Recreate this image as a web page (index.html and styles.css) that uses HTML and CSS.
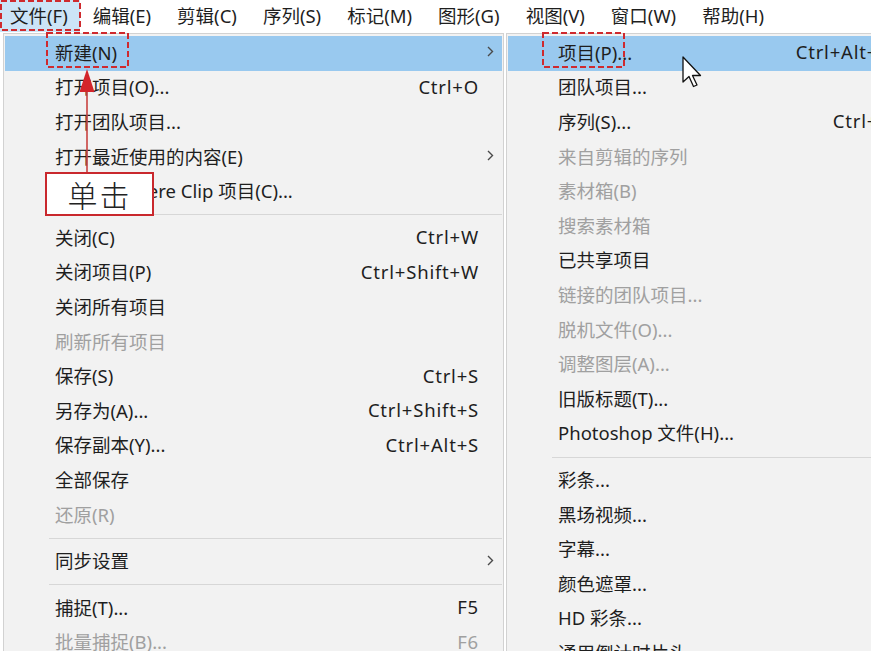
FILE: index.html
```html
<!DOCTYPE html>
<html lang="zh-CN">
<head>
    <meta charset="UTF-8">
    <title>文件菜单 - 新建项目</title>
    <link rel="stylesheet" href="styles.css">
</head>
<body>
    <div class="screen">
        <!-- Menu bar -->
        <nav class="menubar">
            <span class="menubar-item active">文件(F)</span>
            <span class="menubar-item">编辑(E)</span>
            <span class="menubar-item">剪辑(C)</span>
            <span class="menubar-item">序列(S)</span>
            <span class="menubar-item">标记(M)</span>
            <span class="menubar-item">图形(G)</span>
            <span class="menubar-item">视图(V)</span>
            <span class="menubar-item">窗口(W)</span>
            <span class="menubar-item">帮助(H)</span>
        </nav>

        <div class="menus">
            <!-- File menu -->
            <ul class="menu menu-main">
                <li class="menu-item hover"><span class="label">新建(N)</span><span class="arrow-col"><svg class="chevron" width="7" height="11" viewBox="0 0 7 11"><polyline points="1,1 5.5,5.5 1,10"/></svg></span></li>
                <li class="menu-item"><span class="label">打开项目(O)...</span><span class="shortcut">Ctrl+O</span><span class="arrow-col"></span></li>
                <li class="menu-item"><span class="label">打开团队项目...</span><span class="arrow-col"></span></li>
                <li class="menu-item"><span class="label">打开最近使用的内容(E)</span><span class="arrow-col"><svg class="chevron" width="7" height="11" viewBox="0 0 7 11"><polyline points="1,1 5.5,5.5 1,10"/></svg></span></li>
                <li class="menu-item"><span class="label">打开 Premiere Clip 项目(C)...</span><span class="arrow-col"></span></li>
                <li class="separator"></li>
                <li class="menu-item"><span class="label">关闭(C)</span><span class="shortcut">Ctrl+W</span><span class="arrow-col"></span></li>
                <li class="menu-item"><span class="label">关闭项目(P)</span><span class="shortcut">Ctrl+Shift+W</span><span class="arrow-col"></span></li>
                <li class="menu-item"><span class="label">关闭所有项目</span><span class="arrow-col"></span></li>
                <li class="menu-item disabled"><span class="label">刷新所有项目</span><span class="arrow-col"></span></li>
                <li class="menu-item"><span class="label">保存(S)</span><span class="shortcut">Ctrl+S</span><span class="arrow-col"></span></li>
                <li class="menu-item"><span class="label">另存为(A)...</span><span class="shortcut">Ctrl+Shift+S</span><span class="arrow-col"></span></li>
                <li class="menu-item"><span class="label">保存副本(Y)...</span><span class="shortcut">Ctrl+Alt+S</span><span class="arrow-col"></span></li>
                <li class="menu-item"><span class="label">全部保存</span><span class="arrow-col"></span></li>
                <li class="menu-item disabled"><span class="label">还原(R)</span><span class="arrow-col"></span></li>
                <li class="separator"></li>
                <li class="menu-item"><span class="label">同步设置</span><span class="arrow-col"><svg class="chevron" width="7" height="11" viewBox="0 0 7 11"><polyline points="1,1 5.5,5.5 1,10"/></svg></span></li>
                <li class="separator"></li>
                <li class="menu-item"><span class="label">捕捉(T)...</span><span class="shortcut">F5</span><span class="arrow-col"></span></li>
                <li class="menu-item disabled"><span class="label">批量捕捉(B)...</span><span class="shortcut">F6</span><span class="arrow-col"></span></li>
            </ul>

            <!-- New submenu -->
            <ul class="menu menu-sub">
                <li class="menu-item hover"><span class="label">项目(P)...</span><span class="shortcut">Ctrl+Alt+N</span><span class="arrow-col"></span></li>
                <li class="menu-item"><span class="label">团队项目...</span><span class="arrow-col"></span></li>
                <li class="menu-item"><span class="label">序列(S)...</span><span class="shortcut">Ctrl+N</span><span class="arrow-col"></span></li>
                <li class="menu-item disabled"><span class="label">来自剪辑的序列</span><span class="arrow-col"></span></li>
                <li class="menu-item disabled"><span class="label">素材箱(B)</span><span class="arrow-col"></span></li>
                <li class="menu-item disabled"><span class="label">搜索素材箱</span><span class="arrow-col"></span></li>
                <li class="menu-item"><span class="label">已共享项目</span><span class="arrow-col"></span></li>
                <li class="menu-item disabled"><span class="label">链接的团队项目...</span><span class="arrow-col"></span></li>
                <li class="menu-item disabled"><span class="label">脱机文件(O)...</span><span class="arrow-col"></span></li>
                <li class="menu-item disabled"><span class="label">调整图层(A)...</span><span class="arrow-col"></span></li>
                <li class="menu-item"><span class="label">旧版标题(T)...</span><span class="arrow-col"></span></li>
                <li class="menu-item"><span class="label">Photoshop 文件(H)...</span><span class="arrow-col"></span></li>
                <li class="separator"></li>
                <li class="menu-item"><span class="label">彩条...</span><span class="arrow-col"></span></li>
                <li class="menu-item"><span class="label">黑场视频...</span><span class="arrow-col"></span></li>
                <li class="menu-item"><span class="label">字幕...</span><span class="arrow-col"></span></li>
                <li class="menu-item"><span class="label">颜色遮罩...</span><span class="arrow-col"></span></li>
                <li class="menu-item"><span class="label">HD 彩条...</span><span class="arrow-col"></span></li>
                <li class="menu-item"><span class="label">通用倒计时片头...</span><span class="arrow-col"></span></li>
            </ul>
        </div>

        <!-- Annotations -->
        <svg class="mark mark-file" width="82" height="32" viewBox="0 0 82 32"><rect x="1" y="1" width="79" height="29"/></svg>
        <svg class="mark mark-new" width="84" height="37" viewBox="0 0 84 37"><rect x="1" y="1" width="81" height="34"/></svg>
        <svg class="mark mark-project" width="84" height="37" viewBox="0 0 84 37"><rect x="1" y="1" width="81" height="34"/></svg>

        <svg class="pointer-arrow" width="18" height="106" viewBox="0 0 18 106">
            <line x1="9" y1="20" x2="9" y2="104"/>
            <polygon points="9,1 16.5,24 1.5,24"/>
        </svg>

        <div class="callout">单击</div>

        <svg class="cursor" width="22" height="33" viewBox="0 0 22 33">
            <path d="M1 1 L1 26 L7 20.5 L11.5 30.5 L15 29 L10.5 19.5 L18.5 19.5 Z"/>
        </svg>
    </div>
</body>
</html>
```

FILE: styles.css
```css
* {
    margin: 0;
    padding: 0;
    box-sizing: border-box;
}

body {
    font-family: "Noto Sans", "Noto Sans CJK SC", sans-serif;
    font-size: 18.5px;
    color: #1e1e1e;
    background-color: #fff;
    overflow: hidden;
}

.screen {
    position: relative;
    width: 871px;
    height: 651px;
    overflow: hidden;
}

/* Menu bar */
.menubar {
    display: flex;
    height: 33px;
    background-color: #fff;
}

.menubar-item {
    display: flex;
    align-items: center;
    height: 32px;
    padding: 0 13px 3px;
    white-space: nowrap;
}

.menubar-item:first-child {
    padding-left: 10px;
    padding-right: 12px;
}

.menubar-item.active {
    background-color: #cce4f7;
}

/* Drop-down menus */
.menus {
    display: flex;
    align-items: flex-start;
    gap: 2px;
    margin-left: 3px;
}

.menu {
    list-style: none;
    flex-shrink: 0;
    background-color: #f2f2f2;
    border: 1px solid #d2d2d2;
    padding: 2px 1px;
}

.menu-main {
    width: 501px;
}

.menu-sub {
    width: 412px;
}

.menu-item {
    display: flex;
    align-items: center;
    height: 34.6px;
    padding-left: 50px;
    padding-bottom: 3px;
    white-space: nowrap;
}

.menu-item.hover {
    background-color: #99c9ef;
}

.menu-item.disabled {
    color: #a0a0a0;
}

.menu-item .label {
    flex: 1;
}

.menu-item .shortcut {
    letter-spacing: 0.8px;
}

.menu-item .arrow-col {
    width: 23px;
    display: flex;
    justify-content: center;
    align-items: center;
}

.chevron polyline {
    fill: none;
    stroke: #4a4a4a;
    stroke-width: 1.4;
}

.separator {
    display: flex;
    align-items: center;
    height: 12px;
    padding-left: 44px;
}

.separator::before {
    content: "";
    flex: 1;
    height: 1px;
    background-color: #d7d7d7;
}

/* Annotations over the menus */
.mark {
    position: absolute;
}

.mark rect {
    fill: none;
    stroke: #cf2a2e;
    stroke-width: 2;
    stroke-dasharray: 6 3;
}

.mark-file {
    left: 0;
    top: 0;
}

.mark-new {
    left: 46px;
    top: 32px;
}

.mark-project {
    left: 542px;
    top: 32px;
}

.pointer-arrow {
    position: absolute;
    left: 78px;
    top: 68px;
}

.pointer-arrow line {
    stroke: #c8423f;
    stroke-width: 1.6;
}

.pointer-arrow polygon {
    fill: #d3252b;
}

.callout {
    position: absolute;
    left: 45px;
    top: 172px;
    width: 109px;
    height: 44px;
    display: flex;
    align-items: center;
    justify-content: center;
    background-color: #fff;
    border: 2px solid #c9282d;
    font-family: "Noto Sans CJK SC", sans-serif;
    font-size: 30px;
    font-weight: 300;
    letter-spacing: 2px;
    color: #222;
}

.cursor {
    position: absolute;
    left: 682px;
    top: 56px;
}

.cursor path {
    fill: #fff;
    stroke: #111;
    stroke-width: 1.3;
    stroke-linejoin: round;
}
```
